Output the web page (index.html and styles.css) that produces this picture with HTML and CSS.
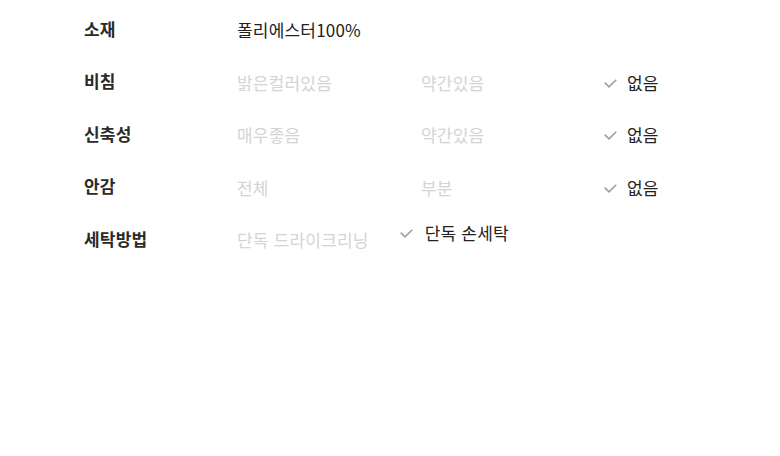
FILE: index.html
```html
<!DOCTYPE html>
<html lang="ko">
<head>
    <meta charset="UTF-8">
    <meta name="viewport" content="width=device-width, initial-scale=1.0">
    <title>상품 정보</title>
    <link rel="stylesheet" href="styles.css">
</head>
<body>

<div class="info">
    <div class="row">
        <div class="label">소재</div>
        <div class="values">
            <span class="text">폴리에스터100%</span>
        </div>
    </div>
    <div class="row">
        <div class="label">비침</div>
        <div class="values grid">
            <span class="opt">밝은컬러있음</span>
            <span class="opt">약간있음</span>
            <span class="opt on"><svg class="check" viewBox="0 0 13 9"><polyline points="0.7,3.6 5,7.9 12.3,0.7"/></svg>없음</span>
        </div>
    </div>
    <div class="row">
        <div class="label">신축성</div>
        <div class="values grid">
            <span class="opt">매우좋음</span>
            <span class="opt">약간있음</span>
            <span class="opt on"><svg class="check" viewBox="0 0 13 9"><polyline points="0.7,3.6 5,7.9 12.3,0.7"/></svg>없음</span>
        </div>
    </div>
    <div class="row">
        <div class="label">안감</div>
        <div class="values grid">
            <span class="opt">전체</span>
            <span class="opt">부분</span>
            <span class="opt on"><svg class="check" viewBox="0 0 13 9"><polyline points="0.7,3.6 5,7.9 12.3,0.7"/></svg>없음</span>
        </div>
    </div>
    <div class="row">
        <div class="label">세탁방법</div>
        <div class="values wash">
            <span class="opt">단독 드라이크리닝</span>
            <span class="opt on up"><svg class="check" viewBox="0 0 13 9"><polyline points="0.7,3.6 5,7.9 12.3,0.7"/></svg>단독 손세탁</span>
        </div>
    </div>
</div>

</body>
</html>
```
FILE: styles.css
```css
body {
    margin: 0;
    background-color: #fff;
    font-family: "Noto Sans CJK KR", "Noto Sans", sans-serif;
    font-size: 17px;
    color: #222;
}
.info {
    padding: 2px 0 0 84px;
}
.row {
    display: flex;
    align-items: center;
    height: 52.5px;
}
.label {
    width: 153px;
    font-weight: bold;
    color: #2a2a2a;
    letter-spacing: 0.2px;
}
.values {
    display: flex;
    align-items: center;
    padding-top: 3px;
    letter-spacing: 0.2px;
}
.grid {
    display: grid;
    grid-template-columns: 184px 182px auto;
}
.wash {
    gap: 30px;
}
.opt {
    color: #d4d4d4;
    display: flex;
    align-items: center;
}
.opt.on {
    color: #222;
}
.check {
    width: 13px;
    height: 9px;
    margin: 2px 10px 0 1px;
    fill: none;
    stroke: #a69c8e;
    stroke-width: 1.5;
}
.up {
    margin-bottom: 14px;
}
.up .check {
    margin-right: 12px;
}
```
